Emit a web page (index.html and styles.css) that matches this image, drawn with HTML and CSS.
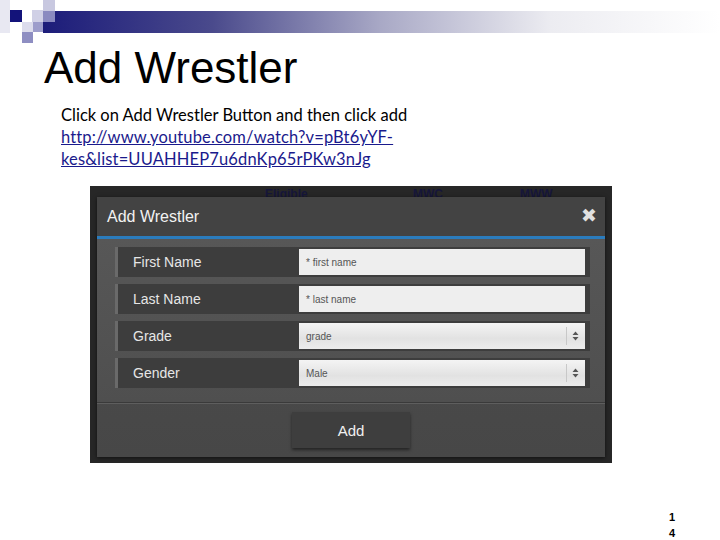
FILE: index.html
```html
<!DOCTYPE html>
<html>
<head>
<meta charset="utf-8">
<link rel="stylesheet" href="styles.css">
</head>
<body>
<div class="slide">
  <svg class="deco" width="720" height="46" viewBox="0 0 720 46">
    <defs>
      <linearGradient id="bar" x1="0" x2="1" y1="0" y2="0">
        <stop offset="0" stop-color="#1c1c7a"/>
        <stop offset="0.25" stop-color="#4a4a8c"/>
        <stop offset="0.5" stop-color="#a9a9c6"/>
        <stop offset="0.75" stop-color="#ececf1"/>
        <stop offset="1" stop-color="#ffffff"/>
      </linearGradient>
    </defs>
    <rect x="43" y="11" width="677" height="22" fill="url(#bar)"/>
    <rect x="0" y="0" width="10" height="33" fill="#e8e8f2"/>
    <rect x="10" y="10" width="12" height="12" fill="#13137a"/>
    <rect x="32" y="10" width="11" height="12" fill="#d0d0e6"/>
    <rect x="43" y="0" width="12" height="11" fill="#c8c8e0"/>
    <rect x="43" y="11" width="12" height="11" fill="#8a8ac0"/>
    <rect x="22" y="22" width="11" height="10" fill="#dcdcec"/>
    <rect x="33" y="22" width="10" height="10" fill="#9d9dcb"/>
    <rect x="22" y="32" width="11" height="11" fill="#8e8ec2"/>
  </svg>
  <h1 class="title">Add Wrestler</h1>
  <div class="text">
    <p class="line">Click on Add Wrestler Button and then click add</p>
    <p class="line"><a class="link" href="#">http://www.youtube.com/watch?v=pBt6yYF-<br>kes&amp;list=UUAHHEP7u6dnKp65rPKw3nJg</a></p>
  </div>
  <div class="shot">
    <div class="behind-top">
      <span class="bg-text bg-1">Eligible</span>
      <span class="bg-text bg-2">MWC</span>
      <span class="bg-text bg-3">MWW</span>
    </div>
    <div class="modal">
      <div class="modal-head">
        <span class="modal-title">Add Wrestler</span>
        <span class="close">&#x2716;</span>
      </div>
      <div class="modal-body">
        <div class="row">
          <div class="label">First Name</div>
          <div class="field"><span class="ph">* first name</span></div>
        </div>
        <div class="row">
          <div class="label">Last Name</div>
          <div class="field"><span class="ph">* last name</span></div>
        </div>
        <div class="row">
          <div class="label">Grade</div>
          <div class="field select"><span class="ph">grade</span><span class="arrows"><svg width="7" height="10" viewBox="0 0 7 10"><path d="M3.5 0.5 L6.5 4 H0.5 Z M3.5 9.5 L6.5 6 H0.5 Z" fill="#555"/></svg></span></div>
        </div>
        <div class="row">
          <div class="label">Gender</div>
          <div class="field select"><span class="ph">Male</span><span class="arrows"><svg width="7" height="10" viewBox="0 0 7 10"><path d="M3.5 0.5 L6.5 4 H0.5 Z M3.5 9.5 L6.5 6 H0.5 Z" fill="#555"/></svg></span></div>
        </div>
      </div>
      <div class="modal-foot">
        <div class="btn">Add</div>
      </div>
    </div>
  </div>
  <div class="pagenum">1<br>4</div>
</div>
</body>
</html>
```
FILE: styles.css
```css
html, body {
  margin: 0;
  padding: 0;
  background: #ffffff;
}
.slide {
  width: 720px;
  height: 540px;
  position: relative;
  overflow: hidden;
}
.deco {
  display: block;
}
.title {
  margin: 0 0 0 44px;
  font-family: "Liberation Sans", Arial, sans-serif;
  font-weight: normal;
  font-size: 44px;
  line-height: 44px;
  color: #000;
}
.text {
  margin: 14px 0 0 61px;
  font-family: Lato, "Open Sans", sans-serif;
  font-size: 16.5px;
  line-height: 22px;
  color: #000;
}
.line {
  margin: 0;
}
.link {
  color: #1a1a8c;
  text-decoration: underline;
  letter-spacing: 0.15px;
}
.shot {
  margin: 16px 0 0 90px;
  width: 522px;
  height: 277px;
  background: #272727;
  position: relative;
  box-sizing: border-box;
  padding: 11px 7px 0 7px;
}
.behind-top {
  position: absolute;
  left: 0;
  top: 0;
  width: 100%;
  height: 20px;
}
.bg-text {
  position: absolute;
  top: 1px;
  font-family: "Liberation Sans", Arial, sans-serif;
  font-weight: bold;
  font-size: 12px;
  line-height: 14px;
  color: #16163a;
}
.bg-1 { left: 175px; }
.bg-2 { left: 323px; }
.bg-3 { left: 430px; }
.modal {
  position: relative;
  z-index: 1;
  width: 508px;
  height: 260px;
  background: linear-gradient(#4e4e4e, #474747);
  box-shadow: 0 1px 4px rgba(0,0,0,0.6);
  display: flex;
  flex-direction: column;
}
.modal-head {
  background: #434343;
  border-bottom: 3px solid #2b7cbd;
  display: flex;
  align-items: center;
  justify-content: space-between;
  padding: 1px 8px 0 10px;
  box-sizing: border-box;
  height: 42px;
}
.modal-title {
  font-family: "Liberation Sans", Arial, sans-serif;
  font-size: 16px;
  color: #f2f2f2;
}
.close {
  font-family: "DejaVu Sans", sans-serif;
  font-size: 19px;
  line-height: 19px;
  color: #e0e0e0;
  font-weight: bold;
  margin-top: -4px;
}
.modal-body {
  padding: 8px 15px 14px 18px;
  display: flex;
  flex-direction: column;
  gap: 7px;
  border-bottom: 1px solid #3a3a3a;
  background: linear-gradient(#575757, #4f4f4f);
}
.row {
  height: 30px;
  display: flex;
  align-items: center;
  background: #3d3d3d;
  border-left: 3px solid #6a6a6a;
  padding-right: 5px;
}
.label {
  width: 181px;
  box-sizing: border-box;
  padding-left: 15px;
  font-family: "Liberation Sans", Arial, sans-serif;
  font-size: 14px;
  color: #e6e6e6;
}
.field {
  flex: 1;
  height: 26px;
  background: #eeeeee;
  display: flex;
  align-items: center;
  padding-left: 7px;
  box-sizing: border-box;
}
.select {
  background: linear-gradient(#f4f4f4, #e2e2e2 60%, #ececec);
  justify-content: space-between;
}
.ph {
  font-family: "Liberation Sans", Arial, sans-serif;
  font-size: 10px;
  color: #555;
}
.arrows {
  border-left: 1px solid #c8c8c8;
  height: 18px;
  width: 16px;
  display: flex;
  align-items: center;
  justify-content: center;
  margin-right: 2px;
}
.modal-foot {
  flex: 1;
  display: flex;
  justify-content: center;
  padding-top: 8px;
  border-top: 1px solid #5e5e5e;
}
.btn {
  width: 118px;
  height: 36px;
  background: #3e3e3e;
  box-shadow: 0 2px 3px rgba(0,0,0,0.5);
  display: flex;
  align-items: center;
  justify-content: center;
  font-family: "Liberation Sans", Arial, sans-serif;
  font-size: 15px;
  color: #f0f0f0;
}
.pagenum {
  position: absolute;
  left: 669px;
  top: 509px;
  font-family: "Liberation Sans", Arial, sans-serif;
  font-weight: bold;
  font-size: 11px;
  line-height: 16px;
  color: #000;
}
```
